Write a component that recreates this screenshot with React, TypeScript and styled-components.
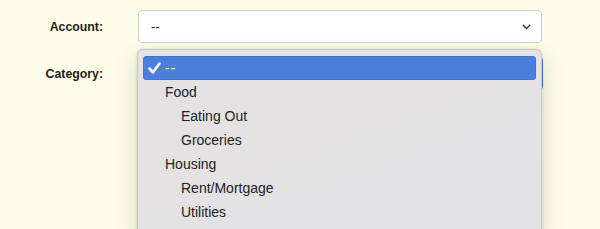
import * as React from 'react';
import styled, { createGlobalStyle } from 'styled-components';

const GlobalStyle = createGlobalStyle`
  html, body {
    margin: 0;
    padding: 0;
    background: #fdfce9;
    overflow: hidden;
  }
  body {
    font-family: 'Liberation Sans', Arial, sans-serif;
    color: #222;
  }
`;

const Form = styled.div`
  display: grid;
  grid-template-columns: 103px 404px;
  grid-auto-rows: 33px;
  align-content: start;
  column-gap: 35px;
  row-gap: 14px;
  padding: 10px 0 0 0;
  height: 229px;
  box-sizing: border-box;
  overflow: hidden;
`;

const Label = styled.label`
  font-size: 12.3px;
  font-weight: bold;
  text-align: right;
  align-self: center;
  color: #222;
`;

const Field = styled.div`
  position: relative;
`;

const SelectBox = styled.div<{ $focused?: boolean }>`
  height: 33px;
  box-sizing: border-box;
  background: #fff;
  border: 1px solid ${(p) => (p.$focused ? '#3b7be0' : '#cfcfcf')};
  box-shadow: ${(p) => (p.$focused ? '0 0 0 1px #3b7be0' : 'none')};
  border-radius: 4px;
  display: flex;
  align-items: center;
  justify-content: space-between;
  padding: 0 10px 0 12px;
  font-size: 13px;
  color: #222;
`;

const Menu = styled.div`
  position: absolute;
  top: -8px;
  left: -1px;
  width: 405px;
  height: 190px;
  box-sizing: border-box;
  background: linear-gradient(160deg, #e4e2e3 0%, #e4e2e3 45%, #e2e2e6 100%);
  border: 1px solid #c9c7c6;
  border-bottom: none;
  border-radius: 6px 6px 0 0;
  box-shadow: 0 8px 22px rgba(90, 85, 40, 0.22), 0 0 3px rgba(0, 0, 0, 0.12);
  padding: 6px 5px 5px;
  z-index: 2;
`;

const Option = styled.div<{ $level: number; $selected?: boolean }>`
  height: 24px;
  box-sizing: border-box;
  display: flex;
  align-items: center;
  font-size: 14px;
  padding-left: ${(p) => 21 + p.$level * 16}px;
  letter-spacing: ${(p) => (p.$selected ? '1px' : 'normal')};
  position: relative;
  border-radius: 3px;
  color: ${(p) => (p.$selected ? '#fff' : '#222')};
  background: ${(p) => (p.$selected ? '#4a80dc' : 'transparent')};
  border: 1px solid ${(p) => (p.$selected ? '#3f74d6' : 'transparent')};
`;

const Check = styled.svg`
  position: absolute;
  left: 4px;
  top: 5px;
`;

const Chevron = () => (
  <svg width="9" height="6" viewBox="0 0 9 6">
    <path d="M1 1l3.5 3.5L8 1" fill="none" stroke="#333" strokeWidth="1.4" />
  </svg>
);

const OPTIONS = [
  { label: '--', level: 0, selected: true },
  { label: 'Food', level: 0 },
  { label: 'Eating Out', level: 1 },
  { label: 'Groceries', level: 1 },
  { label: 'Housing', level: 0 },
  { label: 'Rent/Mortgage', level: 1 },
  { label: 'Utilities', level: 1 },
];

const App: React.FC = () => (
  <>
    <GlobalStyle />
    <Form>
      <Label>Account:</Label>
      <Field>
        <SelectBox>
          <span>--</span>
          <Chevron />
        </SelectBox>
      </Field>
      <Label>Category:</Label>
      <Field>
        <SelectBox $focused>
          <span>--</span>
        </SelectBox>
        <Menu>
          {OPTIONS.map((o) => (
            <Option key={o.label} $level={o.level} $selected={o.selected}>
              {o.selected && (
                <Check width="13" height="12" viewBox="0 0 13 12">
                  <path d="M1.5 6.5l3.5 3.8L11.5 1.5" fill="none" stroke="#fff" strokeWidth="2.6" strokeLinecap="round" strokeLinejoin="round" />
                </Check>
              )}
              {o.label}
            </Option>
          ))}
        </Menu>
      </Field>
    </Form>
  </>
);

export default App;
